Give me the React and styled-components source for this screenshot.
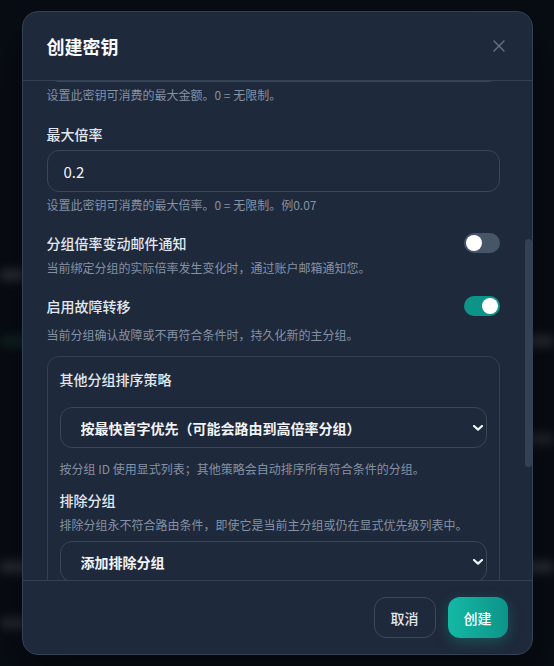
import React, { useLayoutEffect, useRef, useState } from 'react';
import styled, { createGlobalStyle } from 'styled-components';

const GlobalStyle = createGlobalStyle`
  * { box-sizing: border-box; }
  html, body { margin: 0; height: 100%; }
  body {
    background: #0b1017;
    font-family: "Noto Sans CJK SC", "Noto Sans", sans-serif;
    color: #e2e8f0;
    overflow: hidden;
  }
`;

const Backdrop = styled.div`
  position: fixed;
  inset: 0;
  background: #0c1119;
  overflow: hidden;
`;

const BlurPage = styled.div`
  display: flex;
  flex-direction: column;
  padding: 262px 0 0;
  filter: blur(5px);
  opacity: 0.8;
`;

const PageRow = styled.div`
  display: flex;
  justify-content: space-between;
  align-items: center;
  height: ${p => p.h}px;
`;

const PageCell = styled.div`
  width: ${p => p.w}px;
  height: ${p => p.bar || 12}px;
  border-radius: 6px;
  background: ${p => p.color || '#3a404a'};
`;

const Overlay = styled.div`
  position: fixed;
  inset: 0;
  display: flex;
  align-items: center;
  justify-content: center;
  background: rgba(3, 6, 11, 0.35);
`;

const Modal = styled.div`
  width: 511px;
  height: 644px;
  display: flex;
  flex-direction: column;
  background: #1e293b;
  border: 1px solid #334155;
  border-radius: 16px;
  overflow: hidden;
  box-shadow: 0 20px 50px rgba(0, 0, 0, 0.5);
`;

const Header = styled.div`
  flex: none;
  height: 69px;
  display: flex;
  align-items: center;
  justify-content: space-between;
  padding: 0 21px 0 24px;
  border-bottom: 1px solid #334155;
`;

const Title = styled.h2`
  margin: 0;
  font-size: 18px;
  font-weight: 700;
  color: #f8fafc;
`;

const CloseButton = styled.button`
  width: 24px;
  height: 24px;
  display: flex;
  align-items: center;
  justify-content: center;
  padding: 0;
  border: none;
  background: transparent;
  color: #64748b;
  cursor: pointer;
`;

const BodyWrap = styled.div`
  position: relative;
  flex: 1;
  min-height: 0;
`;

const Body = styled.div`
  position: relative;
  height: 100%;
  overflow-y: auto;
  padding: 0 32px 0 24px;
  scrollbar-width: none;
`;

const ScrollThumb = styled.div`
  position: absolute;
  right: 0;
  width: 7px;
  border-radius: 4px;
  background: #334155;
  pointer-events: none;
`;

const Stack = styled.div`
  display: flex;
  flex-direction: column;
  gap: 20px;
  padding: 16px 0 24px;
`;

const Field = styled.div`
  display: flex;
  flex-direction: column;
`;

const Label = styled.label`
  font-size: 14px;
  line-height: ${p => p.lh || 22}px;
  font-weight: 500;
  color: #e2e8f0;
  margin-top: ${p => p.mt || 0}px;
  margin-bottom: ${p => p.mb ?? 5}px;
`;

const TextInput = styled.input`
  height: 42px;
  width: 100%;
  padding: 0 16px;
  border: 1px solid #3a4759;
  border-radius: 12px;
  background: transparent;
  font-family: inherit;
  font-size: 15px;
  color: #f1f5f9;
  outline: none;
`;

const TextArea = styled.textarea`
  height: ${p => p.h}px;
  width: 100%;
  padding: 10px 16px;
  border: 1px solid #3a4759;
  border-radius: 12px;
  background: transparent;
  font-family: inherit;
  font-size: 14px;
  color: #f1f5f9;
  resize: none;
  outline: none;
`;

const Help = styled.p`
  margin: ${p => p.mt ?? 4}px 0 0;
  font-size: 12px;
  line-height: 17px;
  color: #8591a4;
`;

const SwitchRow = styled.div`
  display: flex;
  align-items: center;
  justify-content: space-between;
  height: 20px;
`;

const SwitchLabel = styled.span`
  font-size: 14px;
  font-weight: 500;
  color: #e2e8f0;
`;

const Switch = styled.button`
  position: relative;
  width: 36px;
  height: 20px;
  padding: 0;
  border: none;
  border-radius: 10px;
  background: ${p => (p.on ? '#0d9488' : '#475569')};
  cursor: pointer;

  &::after {
    content: '';
    position: absolute;
    top: 2px;
    left: ${p => (p.on ? 18 : 2)}px;
    width: 16px;
    height: 16px;
    border-radius: 50%;
    background: #ffffff;
  }
`;

const GroupBox = styled.div`
  margin-top: 13px;
  border: 1px solid #334155;
  border-radius: 12px;
  padding: 12px;
  display: flex;
  flex-direction: column;
`;

const SelectWrap = styled.div`
  position: relative;
  margin-top: ${p => p.mt || 0}px;
`;

const Select = styled.select`
  appearance: none;
  width: 100%;
  height: 41px;
  padding: 0 28px 0 20px;
  border: 1px solid #3a4759;
  border-radius: 12px;
  background: transparent;
  font-family: inherit;
  font-size: 14px;
  font-weight: 700;
  color: #f1f5f9;
  outline: none;

  option { background: #1e293b; }
`;

const Chevron = styled.svg`
  position: absolute;
  right: 4px;
  top: 50%;
  margin-top: -3px;
  pointer-events: none;
`;

const Footer = styled.div`
  flex: none;
  display: flex;
  justify-content: flex-end;
  gap: 12px;
  padding: 16px 24px;
  border-top: 1px solid #334155;
`;

const Button = styled.button`
  height: 41px;
  padding: 0 16px;
  border-radius: 12px;
  font-family: inherit;
  font-size: 14px;
  font-weight: 500;
  cursor: pointer;
  color: ${p => (p.primary ? '#ffffff' : '#e2e8f0')};
  border: ${p => (p.primary ? 'none' : '1px solid #3d4a5d')};
  background: ${p => (p.primary ? 'linear-gradient(90deg, #14b8a6, #0d9488)' : 'transparent')};
  box-shadow: ${p => (p.primary ? '0 4px 14px rgba(20, 184, 166, 0.28)' : 'none')};
`;

const ChevronIcon = () => (
  <Chevron width="10" height="6" viewBox="0 0 10 6">
    <polyline points="1,1 5,4.6 9,1" fill="none" stroke="#f1f5f9" strokeWidth="2.2" strokeLinecap="round" strokeLinejoin="round" />
  </Chevron>
);

// blurred page behind the dialog, only the edges show
const backdropRows = [
  { h: 26, left: 26, right: 0, color: '#50555d' },
  { h: 40, left: 0, right: 0 },
  { h: 26, left: 60, right: 60, color: '#1b3d37', rightColor: '#474c54' },
  { h: 70, left: 0, right: 0 },
  { h: 30, left: 0, right: 50, rightColor: '#3c424b' },
  { h: 100, left: 0, right: 0 },
  { h: 26, left: 60, right: 60, color: '#4d535b', rightColor: '#4d535b' },
  { h: 30, left: 0, right: 0 },
  { h: 26, left: 30, right: 0, color: '#444a52' },
];

const App = () => {
  const bodyRef = useRef(null);
  const anchorRef = useRef(null);
  const [thumb, setThumb] = useState({ top: 0, height: 0 });

  useLayoutEffect(() => {
    const body = bodyRef.current;
    if (!body || !anchorRef.current) return;
    body.scrollTop = anchorRef.current.offsetTop - 42;
    const { scrollTop, scrollHeight, clientHeight } = body;
    setThumb({
      top: (scrollTop * clientHeight) / scrollHeight,
      height: (clientHeight * clientHeight) / scrollHeight,
    });
  }, []);

  return (
    <>
      <GlobalStyle />
      <Backdrop>
        <BlurPage>
          {backdropRows.map((r, i) => (
            <PageRow key={i} h={r.h}>
              <PageCell w={r.left} color={r.color} />
              <PageCell w={r.right} color={r.rightColor || r.color} />
            </PageRow>
          ))}
        </BlurPage>
      </Backdrop>
      <Overlay>
        <Modal>
          <Header>
            <Title>创建密钥</Title>
            <CloseButton aria-label="关闭">
              <svg width="12" height="12" viewBox="0 0 12 12">
                <path d="M1 1L11 11M11 1L1 11" stroke="currentColor" strokeWidth="1.4" strokeLinecap="round" />
              </svg>
            </CloseButton>
          </Header>

          <BodyWrap>
            <Body ref={bodyRef}>
              <Stack>
                <Field>
                  <Label>名称</Label>
                  <TextInput defaultValue="" placeholder="我的密钥" />
                </Field>

                <Field>
                  <Label>分组</Label>
                  <SelectWrap>
                    <Select defaultValue="default">
                      <option value="default">default</option>
                    </Select>
                    <ChevronIcon />
                  </SelectWrap>
                  <Help>密钥使用的主分组。</Help>
                </Field>

                <Field>
                  <SwitchRow>
                    <SwitchLabel>永不过期</SwitchLabel>
                    <Switch on type="button" aria-label="永不过期" />
                  </SwitchRow>
                  <Help mt={6}>关闭后可设置密钥的过期时间。</Help>
                </Field>

                <Field>
                  <Label>最大金额</Label>
                  <TextInput defaultValue="0" />
                  <Help>设置此密钥可消费的最大金额。0 = 无限制。</Help>
                </Field>

                <Field>
                  <Label ref={anchorRef}>最大倍率</Label>
                  <TextInput defaultValue="0.2" />
                  <Help>设置此密钥可消费的最大倍率。0 = 无限制。例0.07</Help>
                </Field>

                <Field>
                  <SwitchRow>
                    <SwitchLabel>分组倍率变动邮件通知</SwitchLabel>
                    <Switch type="button" aria-label="分组倍率变动邮件通知" />
                  </SwitchRow>
                  <Help mt={6}>当前绑定分组的实际倍率发生变化时，通过账户邮箱通知您。</Help>
                </Field>

                <Field>
                  <SwitchRow>
                    <SwitchLabel>启用故障转移</SwitchLabel>
                    <Switch on type="button" aria-label="启用故障转移" />
                  </SwitchRow>
                  <Help mt={10}>当前分组确认故障或不再符合条件时，持久化新的主分组。</Help>

                  <GroupBox>
                    <Label lh={20} mb={18}>其他分组排序策略</Label>
                    <SelectWrap>
                      <Select defaultValue="ttft">
                        <option value="ttft">按最快首字优先（可能会路由到高倍率分组）</option>
                        <option value="explicit">显式列表</option>
                      </Select>
                      <ChevronIcon />
                    </SelectWrap>
                    <Help mt={12}>按分组 ID 使用显式列表；其他策略会自动排序所有符合条件的分组。</Help>

                    <Label lh={20} mt={13} mb={0}>排除分组</Label>
                    <Help mt={6}>排除分组永不符合路由条件，即使它是当前主分组或仍在显式优先级列表中。</Help>
                    <SelectWrap mt={8}>
                      <Select defaultValue="">
                        <option value="">添加排除分组</option>
                      </Select>
                      <ChevronIcon />
                    </SelectWrap>
                    <Help mt={8}>尚未排除任何分组。</Help>
                  </GroupBox>
                </Field>

                <Field>
                  <Label>IP 白名单</Label>
                  <TextArea h={114} placeholder="每行一个 IP 或 CIDR" />
                  <Help>留空表示不限制来源 IP。</Help>
                </Field>
              </Stack>
            </Body>
            <ScrollThumb style={{ top: thumb.top, height: thumb.height }} />
          </BodyWrap>

          <Footer>
            <Button type="button">取消</Button>
            <Button primary type="button">创建</Button>
          </Footer>
        </Modal>
      </Overlay>
    </>
  );
};

export default App;
